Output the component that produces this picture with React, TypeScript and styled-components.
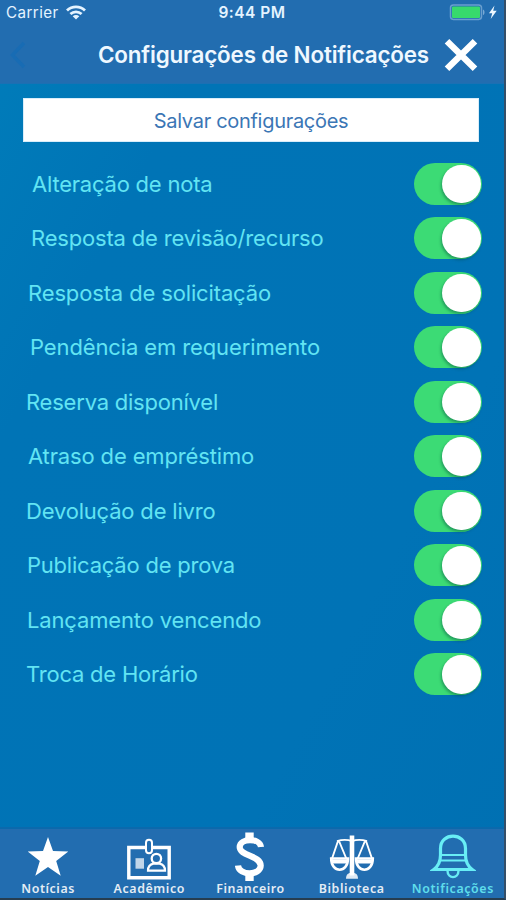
import React from "react";
import styled, { createGlobalStyle } from "styled-components";

const GlobalStyle = createGlobalStyle`
  * { box-sizing: border-box; }
  html, body { margin: 0; padding: 0; overflow: hidden; background: #27415a; }
  button { font: inherit; border: 0; padding: 0; background: none; }
`;

const Screen = styled.div`
  width: 506px;
  height: 900px;
  display: flex;
  flex-direction: column;
  overflow: hidden;
  font-family: Inter, "Liberation Sans", sans-serif;
  background: linear-gradient(118deg, #007dba 0%, #0074b6 24%, #0073b6 70%, #0070b2 100%);
  border-right: 2px solid #344f69;
  border-bottom: 2px solid #263d50;
`;

const Header = styled.header`
  height: 84px;
  flex: none;
  background: #226db0;
  border-bottom: 1px solid #1b70b3;
`;

const StatusBar = styled.div`
  height: 25px;
  display: grid;
  grid-template-columns: 1fr auto 1fr;
  align-items: center;
  padding: 0 6px 0 6px;
  color: #e4f3ff;
`;

const Carrier = styled.div`
  display: flex;
  align-items: center;
  gap: 7px;
  font-size: 15.2px;
  letter-spacing: 0.4px;
`;

const Clock = styled.div`
  font-size: 15.5px;
  font-weight: 600;
  letter-spacing: 0.5px;
`;

const Power = styled.div`
  display: flex;
  justify-content: flex-end;
  align-items: center;
`;

const NavBar = styled.div`
  height: 59px;
  display: flex;
  align-items: center;
  padding-left: 9px;
`;

const BackButton = styled.button`
  width: 89px;
  height: 40px;
  display: flex;
  align-items: center;
`;

const Title = styled.h1`
  margin: 0;
  width: 332px;
  white-space: nowrap;
  font-size: 22.4px;
  line-height: 30px;
  font-weight: 600;
  letter-spacing: -0.17px;
  color: #eff8ff;
`;

const CloseButton = styled.button`
  margin-left: 13px;
  height: 34px;
  display: flex;
`;

const Content = styled.main`
  flex: 1;
  padding: 14px 22px 0 23px;
`;

const SaveButton = styled.button`
  display: block;
  width: 456px;
  height: 44px;
  background: #fff;
  color: #3b76b5;
  font-size: 20px;
  line-height: 44px;
  letter-spacing: -0.3px;
  border: 1px solid #d8edfa;
`;

const List = styled.div`
  margin-top: 14.5px;
`;

const Row = styled.div`
  height: 54.5px;
  display: flex;
  align-items: center;
  justify-content: space-between;
`;

const Label = styled.span<{ $indent: number; $tracking: number }>`
  padding-left: ${(p) => p.$indent}px;
  letter-spacing: ${(p) => p.$tracking}px;
  font-size: 22px;
  line-height: 30px;
  color: #62e4f3;
  white-space: nowrap;
`;

const Switch = styled.button`
  width: 68px;
  height: 42px;
  border-radius: 21px;
  background: #3cdb75;
  display: flex;
  align-items: center;
  justify-content: flex-end;
  padding-right: 1.5px;
`;

const Knob = styled.span`
  width: 38.5px;
  height: 38.5px;
  border-radius: 50%;
  background: #fff;
  box-shadow: -1px 2px 3px rgba(0, 70, 60, 0.42);
`;

const TabBar = styled.nav`
  height: 71px;
  flex: none;
  background: #226db0;
  border-top: 2px solid #0b69ac;
  display: flex;
`;

const Tab = styled.button<{ $active?: boolean }>`
  width: 101.2px;
  flex: none;
  display: flex;
  flex-direction: column;
  align-items: center;
  color: ${(p) => (p.$active ? "#68eef5" : "#fff")};
  &:first-child { margin-left: -2.5px; }
`;

const TabIcon = styled.span`
  height: 52px;
  display: flex;
  svg { display: block; }
`;

const TabLabel = styled.span<{ $tracking: number }>`
  font-family: "Noto Sans", sans-serif;
  font-size: 12.4px;
  line-height: 15px;
  font-weight: 600;
  letter-spacing: ${(p) => p.$tracking}px;
  opacity: 0.88;
  white-space: nowrap;
`;

const WifiIcon = () => (
  <svg width="20" height="15" viewBox="0 0 20 15" fill="none" stroke="currentColor" strokeWidth="2.8">
    <path d="M1 5.4C6 .6 14 .6 19 5.4" />
    <path d="M4.4 9.1c3.2-3 8-3 11.2 0" />
    <path d="M10 14.400 6.700 11.300c1.800-1.600 4.800-1.600 6.600 0Z" fill="currentColor" stroke="none" />
  </svg>
);

const BatteryIcon = () => (
  <svg width="49" height="17" viewBox="0 0 49 17">
    <rect x="1.500" y="1" width="31" height="14.400" rx="2.800" fill="none" stroke="#6a9fce" strokeWidth="1.500" />
    <rect x="3" y="2.500" width="28" height="11.400" rx="1" fill="#37da6c" />
    <path d="M34 5.500c2 .6 2 5 0 5.600Z" fill="#78a9d4" />
    <path d="M45.500 1.500 40 9.300h3.200L41.700 15l6-8.200h-3.500Z" fill="#eef8ff" />
  </svg>
);

const StarIcon = () => (
  <svg width="42" height="52" viewBox="0 0 42 52" fill="currentColor">
    <path d="m21 8 5 14.100 15.300.4-12.100 9.400 4.500 14.800L21 38l-12.700 8.700 4.500-14.800L.7 22.500l15.300-.4Z" />
  </svg>
);

const BadgeIcon = () => (
  <svg width="46" height="52" viewBox="0 0 46 52" fill="none" stroke="currentColor">
    <path d="M19.500 18.500H2.800v30.200h40.400V18.500H26.500" strokeWidth="3.400" />
    <rect x="20" y="10.700" width="6" height="13.500" rx="3" strokeWidth="2" />
    <path d="M9.500 29.200h8.500v10.500H9.500Z" fill="currentColor" strokeWidth="0" opacity=".72" />
    <circle cx="30.400" cy="29.500" r="4.700" strokeWidth="2.300" />
    <path d="M22 41.700h17c0-4.700-2-6.300-5.400-7h-6.200c-3.400.7-5.400 2.300-5.400 7Z" strokeWidth="2.200" />
  </svg>
);

const DollarIcon = () => (
  <svg width="30" height="52" viewBox="0 0 30 52" fill="none" stroke="currentColor">
    <path d="M14.500 3.500v9M14.500 43v9" strokeWidth="8.400" />
    <path d="M26 18C25 8.800 5 8.800 4.700 18c-.2 9 21 8.300 21 18.500C25.600 47 4 47 3 36.500" strokeWidth="6.200" />
  </svg>
);

const ScalesIcon = () => (
  <svg width="46" height="52" viewBox="0 0 46 52" fill="none" stroke="currentColor">
    <path d="M23 6.500v40" strokeWidth="4.600" />
    <path d="M8 12.200q8-2.600 15 0 7-2.600 15 0M9 12 2.900 30M10 12l7.500 18M37 12l6.100 18M36 12l-7.500 18" strokeWidth="1.900" />
    <path d="M2.200 29.500h16.800c0 15-16.800 15-16.800 0ZM27 29.500h16.800c0 15-16.800 15-16.800 0Z" strokeWidth="2.600" />
    <path d="M2 30.500h17v4H2ZM27 30.500h17v4H27Z" fill="currentColor" stroke="none" />
    <path d="M17 49.800c0-4.500 2.500-6 6-6s6 1.500 6 6Z" fill="currentColor" stroke="none" opacity=".85" />
  </svg>
);

const BellIcon = () => (
  <svg width="46" height="52" viewBox="0 0 46 52" fill="none" stroke="currentColor" strokeWidth="3.200">
    <path d="M3.800 40.500c5.300-4 6.700-8.500 6.700-14.500v-6.500C10.500 3 35.500 3 35.500 19.500V26c0 6 1.400 10.500 6.700 14.500Z" />
    <path d="M10.500 26h25M10 31.500h26" strokeWidth="2" />
    <path d="M17.500 41.500c0 8.800 11 8.800 11 0" strokeWidth="2.400" />
  </svg>
);

const settings = [
  { text: "Alteração de nota", indent: 9, tracking: -0.22 },
  { text: "Resposta de revisão/recurso", indent: 8, tracking: -0.18 },
  { text: "Resposta de solicitação", indent: 5, tracking: -0.14 },
  { text: "Pendência em requerimento", indent: 7, tracking: -0.12 },
  { text: "Reserva disponível", indent: 3, tracking: -0.22 },
  { text: "Atraso de empréstimo", indent: 5, tracking: -0.14 },
  { text: "Devolução de livro", indent: 3, tracking: -0.19 },
  { text: "Publicação de prova", indent: 4, tracking: -0.22 },
  { text: "Lançamento vencendo", indent: 4, tracking: -0.15 },
  { text: "Troca de Horário", indent: 3, tracking: -0.22 },
];

const tabs = [
  { text: "Notícias", Icon: StarIcon, tracking: 0.55 },
  { text: "Acadêmico", Icon: BadgeIcon, tracking: 0.6 },
  { text: "Financeiro", Icon: DollarIcon, tracking: 0.55 },
  { text: "Biblioteca", Icon: ScalesIcon, tracking: 0.6 },
  { text: "Notificações", Icon: BellIcon, tracking: 0.62, active: true },
];

export default function App() {
  return (
    <>
      <GlobalStyle />
      <Screen>
        <Header>
          <StatusBar>
            <Carrier>Carrier <WifiIcon /></Carrier>
            <Clock>9:44 PM</Clock>
            <Power><BatteryIcon /></Power>
          </StatusBar>
          <NavBar>
            <BackButton aria-label="Voltar">
              <svg width="20" height="32" viewBox="0 0 20 32" fill="none" stroke="#186cb4" strokeWidth="3.500">
                <path d="M15 4 3.500 16 15 28" />
              </svg>
            </BackButton>
            <Title>Configurações de Notificações</Title>
            <CloseButton aria-label="Fechar">
              <svg width="36" height="34" viewBox="0 0 36 34" stroke="#fff" strokeWidth="6.500">
                <path d="m4 3.200 28 27.600M32 3.200 4 30.800" />
              </svg>
            </CloseButton>
          </NavBar>
        </Header>
        <Content>
          <SaveButton>Salvar configurações</SaveButton>
          <List>
            {settings.map((s) => (
              <Row key={s.text}>
                <Label $indent={s.indent} $tracking={s.tracking}>{s.text}</Label>
                <Switch role="switch" aria-checked="true" aria-label={s.text}><Knob /></Switch>
              </Row>
            ))}
          </List>
        </Content>
        <TabBar>
          {tabs.map(({ text, Icon, tracking, active }) => (
            <Tab key={text} $active={active}>
              <TabIcon><Icon /></TabIcon>
              <TabLabel $tracking={tracking}>{text}</TabLabel>
            </Tab>
          ))}
        </TabBar>
      </Screen>
    </>
  );
}
